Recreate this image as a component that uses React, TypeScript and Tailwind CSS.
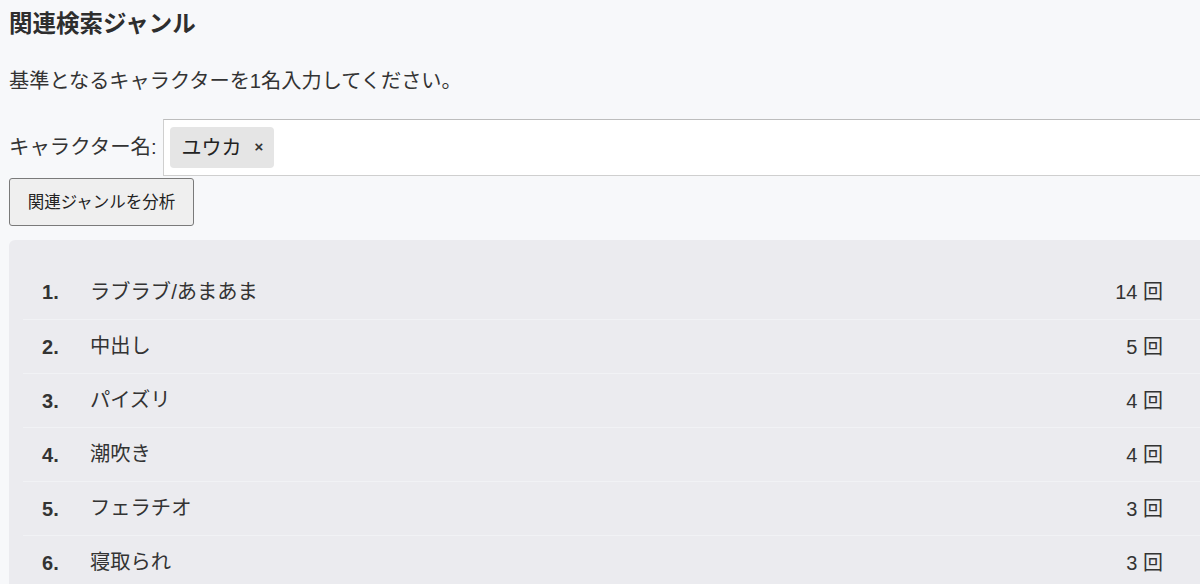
import React from "react";

const rows = [
  { n: 1, label: "ラブラブ/あまあま", count: "14 回" },
  { n: 2, label: "中出し", count: "5 回" },
  { n: 3, label: "パイズリ", count: "4 回" },
  { n: 4, label: "潮吹き", count: "4 回" },
  { n: 5, label: "フェラチオ", count: "3 回" },
  { n: 6, label: "寝取られ", count: "3 回" },
];

export default function App() {
  return (
    <div
      className="w-[1200px] h-[584px] overflow-hidden bg-[#f7f8fa] text-[#2b2b2b]"
      style={{ fontFamily: '"Liberation Sans", "Noto Sans CJK JP", sans-serif' }}
    >
      <div className="w-[1250px] pl-[9px]">
        <h2 className="pt-[8px] h-[40px] text-[23.5px] leading-[32px] font-bold text-[#2e2e2e]">
          関連検索ジャンル
        </h2>
        <p className="mt-[26px] h-[30px] text-[20.2px] leading-[30px] text-[#333]">
          基準となるキャラクターを1名入力してください。
        </p>
        <div className="mt-[23px] flex items-center h-[57px]">
          <span className="text-[20.4px] text-[#333] mr-[6px]">キャラクター名:</span>
          <div className="flex-1 h-[57px] bg-white border border-[#cfcfcf] border-t-[#bdbdbd] flex items-center pl-[6px]">
            <div className="h-[41px] w-[104px] rounded-[4px] bg-[#e5e5e5] flex items-center pl-[12px]">
              <span className="text-[20px] text-[#222]">ユウカ</span>
              <span className="ml-[13px] text-[15px] font-bold text-[#333]">×</span>
            </div>
          </div>
        </div>
        <button className="mt-[2px] h-[48px] w-[185px] rounded-[3px] border border-[#7a7a7a] bg-[#efefef] text-[16.5px] text-[#222] flex items-center justify-center">
          関連ジャンルを分析
        </button>
        <div className="mt-[14px] rounded-[6px] bg-[#ebebef] pt-[25px] px-[14px] pb-[20px]">
          {rows.map((r, i) => (
            <div
              key={r.n}
              className={`flex items-center h-[54px] pl-[19px] pr-[73px] ${i > 0 ? "border-t border-[#f1f2f5]" : ""}`}
            >
              <span className="w-[48px] font-bold text-[20px] text-[#333]">{r.n}.</span>
              <span className="flex-1 text-[20.3px] text-[#333]">{r.label}</span>
              <span className="text-[20px] text-[#333]">{r.count}</span>
            </div>
          ))}
        </div>
      </div>
    </div>
  );
}
